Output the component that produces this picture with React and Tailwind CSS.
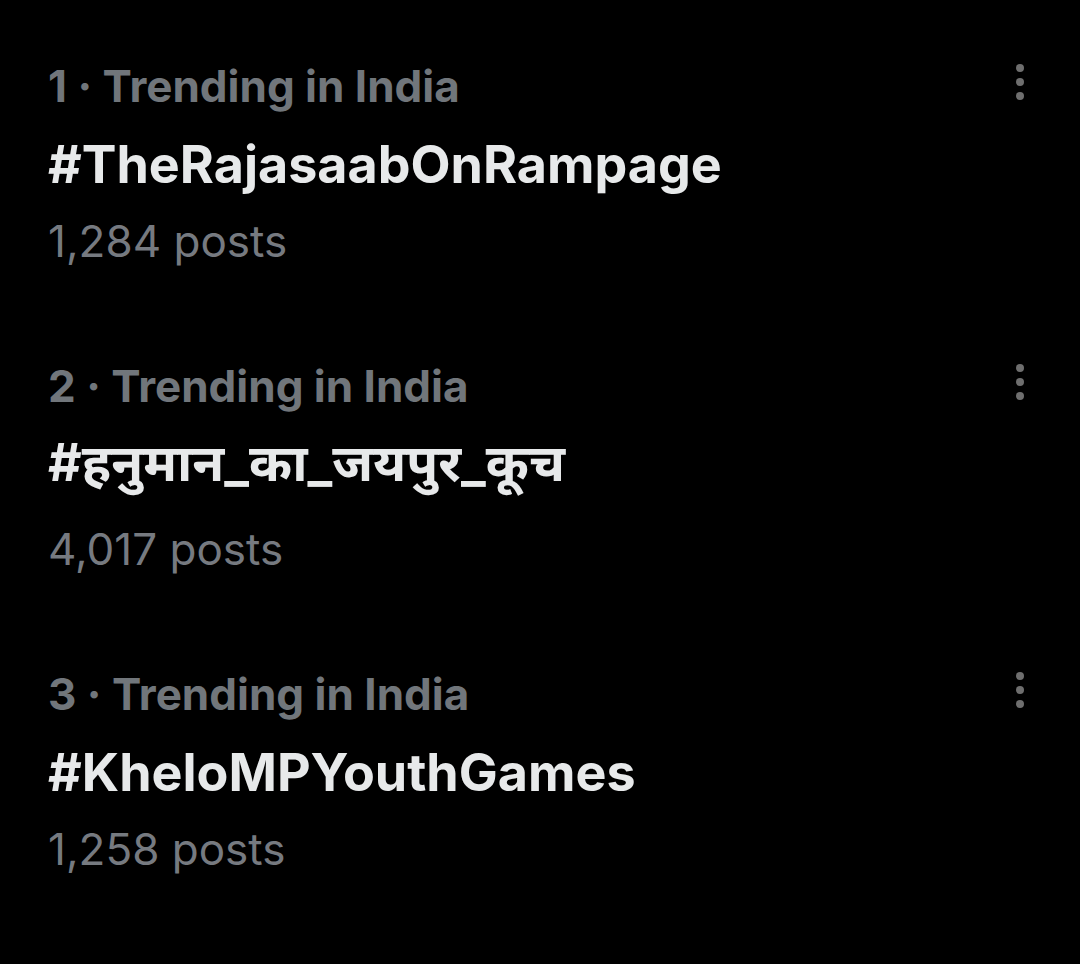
import React from 'react';

const trends = [
  { rank: 1, tag: "#TheRajasaabOnRampage", posts: "1,284", tall: false },
  { rank: 2, tag: "#हनुमान_का_जयपुर_कूच", posts: "4,017", tall: true },
  { rank: 3, tag: "#KheloMPYouthGames", posts: "1,258", tall: false },
];

const font = { fontFamily: 'Inter, "Noto Sans", "Noto Sans Devanagari", sans-serif' };

const MoreDots = () => (
  <div className="flex flex-col items-center gap-[6px] pt-[6px]">
    <span className="w-[8px] h-[8px] rounded-full bg-[#6e6e6e]" />
    <span className="w-[8px] h-[8px] rounded-full bg-[#6e6e6e]" />
    <span className="w-[8px] h-[8px] rounded-full bg-[#6e6e6e]" />
  </div>
);

export default function App() {
  return (
    <div
      className="w-[1080px] h-[964px] bg-black flex flex-col pl-[48px] pr-[56px] pt-[58px] gap-[92px] overflow-hidden"
      style={font}
    >
      {trends.map((t) => (
        <div key={t.rank} className="flex justify-between items-start">
          <div className="flex flex-col">
            <div className="text-[44px] leading-[56px] font-bold text-[#71767b]">
              {t.rank} · Trending in India
            </div>
            <div
              className={
                t.tall
                  ? "text-[52px] leading-[98px] pb-[12px] font-bold text-[#e7e9ea]"
                  : "text-[52px] leading-[102px] font-bold text-[#e7e9ea]"
              }
            >
              {t.tag}
            </div>
            <div className="text-[44px] leading-[50px] text-[#767a80]">
              {t.posts} posts
            </div>
          </div>
          <MoreDots />
        </div>
      ))}
    </div>
  );
}
